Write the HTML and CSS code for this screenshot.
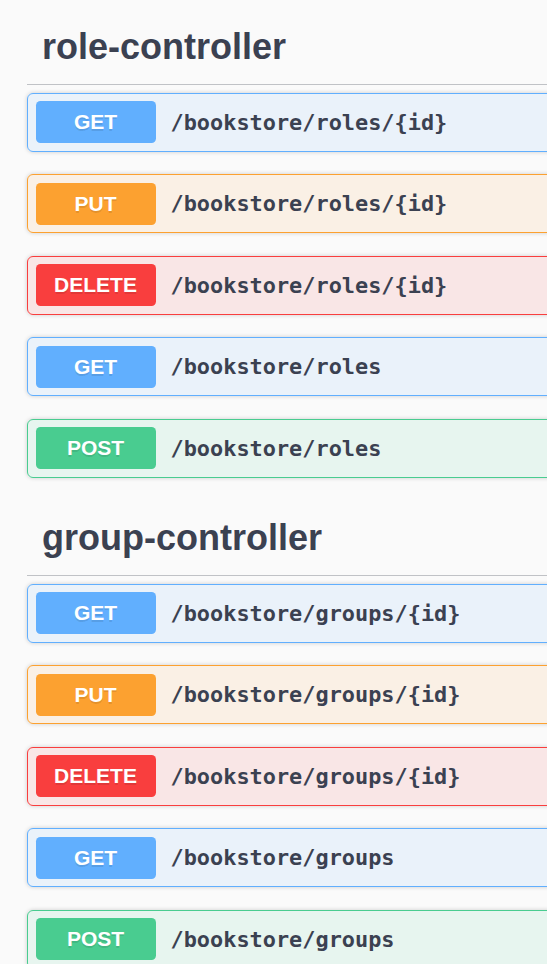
FILE: index.html
```html
<!DOCTYPE html>
<html lang="en">
<head>
<meta charset="utf-8">
<title>Swagger</title>
<link rel="stylesheet" href="styles.css">
</head>
<body>
<div class="wrapper">
  <section class="tag-section">
    <h3 class="tag">role-controller</h3>
    <div class="ops">
      <div class="opblock get"><span class="method">GET</span><span class="path">/bookstore/roles/{id}</span></div>
      <div class="opblock put"><span class="method">PUT</span><span class="path">/bookstore/roles/{id}</span></div>
      <div class="opblock delete"><span class="method">DELETE</span><span class="path">/bookstore/roles/{id}</span></div>
      <div class="opblock get"><span class="method">GET</span><span class="path">/bookstore/roles</span></div>
      <div class="opblock post"><span class="method">POST</span><span class="path">/bookstore/roles</span></div>
    </div>
  </section>
  <section class="tag-section">
    <h3 class="tag">group-controller</h3>
    <div class="ops">
      <div class="opblock get"><span class="method">GET</span><span class="path">/bookstore/groups/{id}</span></div>
      <div class="opblock put"><span class="method">PUT</span><span class="path">/bookstore/groups/{id}</span></div>
      <div class="opblock delete"><span class="method">DELETE</span><span class="path">/bookstore/groups/{id}</span></div>
      <div class="opblock get"><span class="method">GET</span><span class="path">/bookstore/groups</span></div>
      <div class="opblock post"><span class="method">POST</span><span class="path">/bookstore/groups</span></div>
    </div>
  </section>
</div>
</body>
</html>
```
FILE: styles.css
```css
html, body {
  margin: 0;
  padding: 0;
  background: #fafafa;
  overflow: hidden;
}
body {
  font-family: "Liberation Sans", Arial, sans-serif;
  color: #3b4151;
}
.wrapper {
  width: 900px;
  padding: 9px 0 0 27px;
}
.tag-section {
  display: flex;
  flex-direction: column;
}
.tag {
  margin: 0 0 7.5px;
  padding: 15px 30px 15px 15px;
  font-size: 36px;
  line-height: 45px;
  font-weight: 700;
  color: #3b4151;
  border-bottom: 1px solid rgba(59, 65, 81, 0.3);
}
.ops {
  display: flex;
  flex-direction: column;
  gap: 22.5px;
  margin-bottom: 22.5px;
}
.opblock {
  display: flex;
  align-items: center;
  padding: 7.5px;
  border: 1px solid;
  border-radius: 6px;
  box-shadow: 0 0 4.5px rgba(0, 0, 0, 0.19);
}
.method {
  box-sizing: border-box;
  min-width: 120px;
  height: 42px;
  line-height: 42px;
  text-align: center;
  font-size: 21px;
  font-weight: 700;
  color: #fff;
  border-radius: 4.5px;
  text-shadow: 0 1.5px 0 rgba(0, 0, 0, 0.1);
}
.path {
  padding: 0 15px;
  font-family: "DejaVu Sans Mono", "Liberation Mono", monospace;
  font-weight: 700;
  font-size: 21.9px;
  color: #3b4151;
}
.get { background: rgba(97, 175, 254, 0.1); border-color: #61affe; }
.get .method { background: #61affe; }
.put { background: rgba(252, 161, 48, 0.1); border-color: #fca130; }
.put .method { background: #fca130; }
.delete { background: rgba(249, 62, 62, 0.1); border-color: #f93e3e; }
.delete .method { background: #f93e3e; }
.post { background: rgba(73, 204, 144, 0.1); border-color: #49cc90; }
.post .method { background: #49cc90; }
```
